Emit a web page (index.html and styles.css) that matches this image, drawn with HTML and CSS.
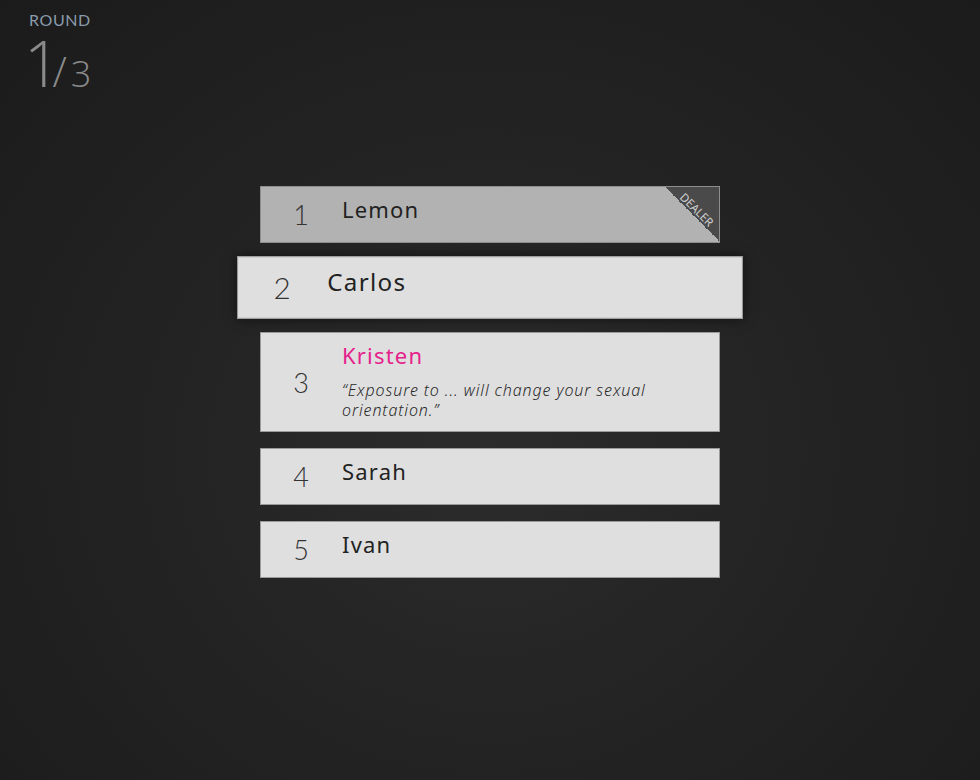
FILE: index.html
```html
<!DOCTYPE html>
<html>
<head>
<meta charset="utf-8">
<link rel="stylesheet" href="styles.css">
</head>
<body>
<div class="round">
  <div class="round-label">ROUND</div>
  <div class="round-count"><span class="cur">1</span><span class="slash">/</span><span class="total">3</span></div>
</div>
<ol class="players">
  <li class="card dealer">
    <div class="num">1</div>
    <div class="body"><div class="name">Lemon</div></div>
    <div class="ribbon"><span>DEALER</span></div>
  </li>
  <li class="card active">
    <div class="num">2</div>
    <div class="body"><div class="name">Carlos</div></div>
  </li>
  <li class="card">
    <div class="num">3</div>
    <div class="body">
      <div class="name pink">Kristen</div>
      <div class="quote">“Exposure to ... will change your sexual orientation.”</div>
    </div>
  </li>
  <li class="card">
    <div class="num">4</div>
    <div class="body"><div class="name">Sarah</div></div>
  </li>
  <li class="card">
    <div class="num">5</div>
    <div class="body"><div class="name">Ivan</div></div>
  </li>
</ol>
</body>
</html>
```
FILE: styles.css
```css
html, body {
  margin: 0;
  height: 100%;
}
body {
  background: radial-gradient(ellipse at 50% 58%, #2c2c2c 0%, #252525 35%, #1b1b1b 100%);
  font-family: "Noto Sans", "DejaVu Sans", sans-serif;
  color: #222;
  overflow: hidden;
}
.round {
  padding: 11px 0 0 29px;
  height: 175px;
  box-sizing: border-box;
}
.round-label {
  font-family: "Lato", "Noto Sans", sans-serif;
  font-size: 16px;
  line-height: 18px;
  color: #8a9bab;
  letter-spacing: 0.6px;
}
.round-count {
  font-family: "Open Sans", "Noto Sans", sans-serif;
  font-weight: 300;
  color: #8a8a8a;
  line-height: 60px;
  margin-top: 4px;
  white-space: nowrap;
}
.cur {
  font-size: 64px;
  font-weight: 300;
  margin-left: -5px;
}
.slash {
  font-size: 42px;
  font-weight: 300;
  margin-left: -8px;
  margin-right: 4px;
}
.total {
  font-size: 36px;
  font-weight: 300;
}
.players {
  list-style: none;
  margin: 11px auto 0;
  padding: 0;
  width: 460px;
  display: flex;
  flex-direction: column;
  gap: 16px;
}
.card {
  position: relative;
  display: flex;
  background: #dfdfdf;
  border: 1px solid #9a9a9a;
  min-height: 55px;
  overflow: hidden;
}
.card.dealer {
  background: #b2b2b2;
  border-color: #8e8e8e;
}
.card.active {
  transform: scale(1.1);
  box-shadow: 0 0 10px rgba(0, 0, 0, 0.55);
  z-index: 1;
}
.num {
  width: 80px;
  flex: none;
  display: flex;
  align-items: center;
  justify-content: center;
  font-family: "Lato", "Noto Sans", sans-serif;
  font-weight: 300;
  font-size: 27px;
  color: #333;
}
.body {
  padding: 8px 20px 11px 1px;
}
.name {
  font-size: 22px;
  line-height: 28px;
  letter-spacing: 1.2px;
  color: #222;
}
.name.pink {
  color: #e5218c;
}
.quote {
  margin-top: 11px;
  font-size: 16px;
  line-height: 20px;
  font-style: italic;
  font-weight: 300;
  color: #2a2a2a;
  letter-spacing: 0.9px;
  padding-right: 30px;
}
.ribbon {
  position: absolute;
  top: 0;
  right: 0;
  width: 54px;
  height: 54px;
  background: linear-gradient(to bottom left, #4a4a4a 50%, transparent 50%);
}
.ribbon span {
  position: absolute;
  top: 16px;
  right: -8px;
  width: 60px;
  text-align: center;
  transform: rotate(45deg);
  font-size: 11.5px;
  line-height: 13px;
  color: #d0d0d0;
  font-family: "Noto Sans", sans-serif;
}
```
